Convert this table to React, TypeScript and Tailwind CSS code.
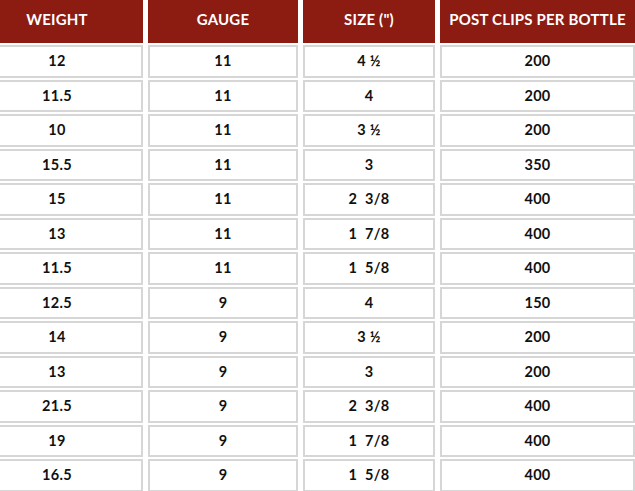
const headers = ["WEIGHT", "GAUGE", "SIZE (\")", "POST CLIPS PER BOTTLE"];

const rows = [
  ["12", "11", "4 ½", "200"],
  ["11.5", "11", "4", "200"],
  ["10", "11", "3 ½", "200"],
  ["15.5", "11", "3", "350"],
  ["15", "11", "2 \u00a03/8", "400"],
  ["13", "11", "1 \u00a07/8", "400"],
  ["11.5", "11", "1 \u00a05/8", "400"],
  ["12.5", "9", "4", "150"],
  ["14", "9", "3 ½", "200"],
  ["13", "9", "3", "200"],
  ["21.5", "9", "2 \u00a03/8", "400"],
  ["19", "9", "1 \u00a07/8", "400"],
  ["16.5", "9", "1 \u00a05/8", "400"],
];

export default function App() {
  return (
    <div className="w-[635px] h-[491px] overflow-hidden bg-white font-['Lato','Open_Sans',sans-serif]">
      {/* table is cropped on the left, like the screenshot */}
      <div className="ml-[-29px] w-[664px] grid grid-cols-[172px_150px_132px_1fr] gap-x-[5px] gap-y-[2px]">
        {headers.map((h) => (
          <div
            key={h}
            className="h-[43px] flex items-center justify-center pb-[5px] bg-[#8c1b12] text-white text-[15px] font-bold tracking-[0.2px]"
          >
            {h}
          </div>
        ))}
        {rows.map((row, i) =>
          row.map((cell, j) => (
            <div
              key={`${i}-${j}`}
              className="h-[32.5px] flex items-center justify-center border-2 border-[#d6d6d6] text-[#111] text-[14.5px] font-bold tracking-[0.3px] whitespace-pre"
            >
              {cell}
            </div>
          ))
        )}
      </div>
    </div>
  );
}
